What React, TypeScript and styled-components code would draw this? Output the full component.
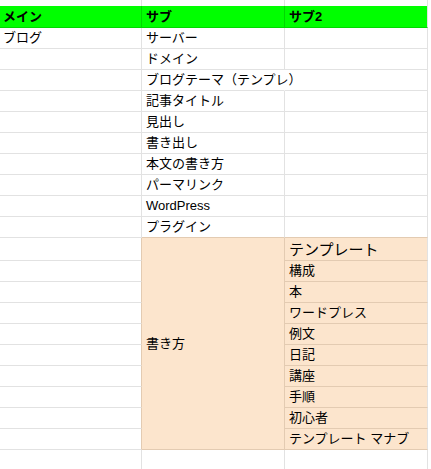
import React from "react";
import styled, { createGlobalStyle } from "styled-components";

const Global = createGlobalStyle`
  html, body { margin: 0; padding: 0; background: #ffffff; }
  body { font-family: "Liberation Sans", "Noto Sans CJK JP", sans-serif; color: #000; }
`;

const GRID = "#e2e2e2";
const TAN = "#e3cbb2";
const PEACH = "#fce5cd";
const GREEN = "#00ff00";
const GREEN_LINE = "#00d800";

const Sheet = styled.div`
  display: grid;
  grid-template-columns: 142px 143px 143px;
  grid-template-rows: 6px 22px repeat(10, 21px) 23px repeat(9, 21px) 21px;
  width: 431px;
  height: 469px;
  overflow: hidden;
`;

type CellProps = {
  $fill?: string;
  $right?: string;
  $bottom?: string;
  $bold?: boolean;
  $size?: number;
  $middle?: boolean;
  $col?: string;
  $row?: string;
  $pad?: number;
};

const Cell = styled.div<CellProps>`
  box-sizing: border-box;
  display: flex;
  align-items: ${(p) => (p.$middle ? "center" : "flex-end")};
  padding: 0 3px ${(p) => (p.$middle ? 0 : 2)}px ${(p) => p.$pad ?? 4}px;
  background: ${(p) => p.$fill ?? "transparent"};
  border-right: 1px solid ${(p) => p.$right ?? GRID};
  border-bottom: 1px solid ${(p) => p.$bottom ?? GRID};
  font-size: ${(p) => p.$size ?? 13}px;
  font-weight: ${(p) => (p.$bold ? 700 : 400)};
  line-height: 16px;
  white-space: nowrap;
  overflow: visible;
  position: relative;
  ${(p) => (p.$col ? `grid-column: ${p.$col};` : "")}
  ${(p) => (p.$row ? `grid-row: ${p.$row};` : "")}
`;

const TopCell = styled.div<{ $col: string }>`
  grid-row: 1;
  grid-column: ${(p) => p.$col};
  border-right: 1px solid ${GRID};
`;

const Overflow = styled.span`
  position: relative;
  z-index: 2;
`;

const subRows = [
  "サーバー",
  "ドメイン",
  "ブログテーマ（テンプレ）",
  "記事タイトル",
  "見出し",
  "書き出し",
  "本文の書き方",
  "パーマリンク",
  "WordPress",
  "プラグイン",
];

const sub2 = [
  "テンプレート",
  "構成",
  "本",
  "ワードプレス",
  "例文",
  "日記",
  "講座",
  "手順",
  "初心者",
  "テンプレート マナブ",
];

export default function App() {
  return (
    <>
      <Global />
      <Sheet>
        <TopCell $col="1" />
        <TopCell $col="2" />
        <TopCell $col="3" />

        <Cell $row="2" $col="1" $fill={GREEN} $right={GREEN_LINE} $bottom={GREEN_LINE} $bold $pad={3}>
          メイン
        </Cell>
        <Cell $row="2" $col="2" $fill={GREEN} $right={GREEN_LINE} $bottom={GREEN_LINE} $bold>
          サブ
        </Cell>
        <Cell $row="2" $col="3" $fill={GREEN} $right={GRID} $bottom={GREEN_LINE} $bold>
          サブ2
        </Cell>

        {subRows.map((s, i) => {
          const row = String(i + 3);
          const last = i === subRows.length - 1;
          return (
            <React.Fragment key={s}>
              <Cell $row={row} $col="1" $pad={3}>
                {i === 0 ? "ブログ" : ""}
              </Cell>
              <Cell
                $row={row}
                $col="2"
                $right={i === 2 ? "transparent" : GRID}
                $bottom={last ? TAN : GRID}
              >
                <Overflow>{s}</Overflow>
              </Cell>
              <Cell $row={row} $col="3" $bottom={last ? TAN : GRID} />
            </React.Fragment>
          );
        })}

        {sub2.map((s, i) => {
          const row = String(i + 13);
          return (
            <React.Fragment key={s}>
              <Cell $row={row} $col="1" $right={TAN} />
              <Cell
                $row={row}
                $col="3"
                $fill={PEACH}
                $bottom={TAN}
                $size={i === 0 ? 15 : 13}
              >
                {s}
              </Cell>
            </React.Fragment>
          );
        })}

        <Cell $row="13 / span 10" $col="2" $fill={PEACH} $right={TAN} $bottom={TAN} $middle>
          書き方
        </Cell>

        <Cell $row="23" $col="1" />
        <Cell $row="23" $col="2" />
        <Cell $row="23" $col="3" />
      </Sheet>
    </>
  );
}
